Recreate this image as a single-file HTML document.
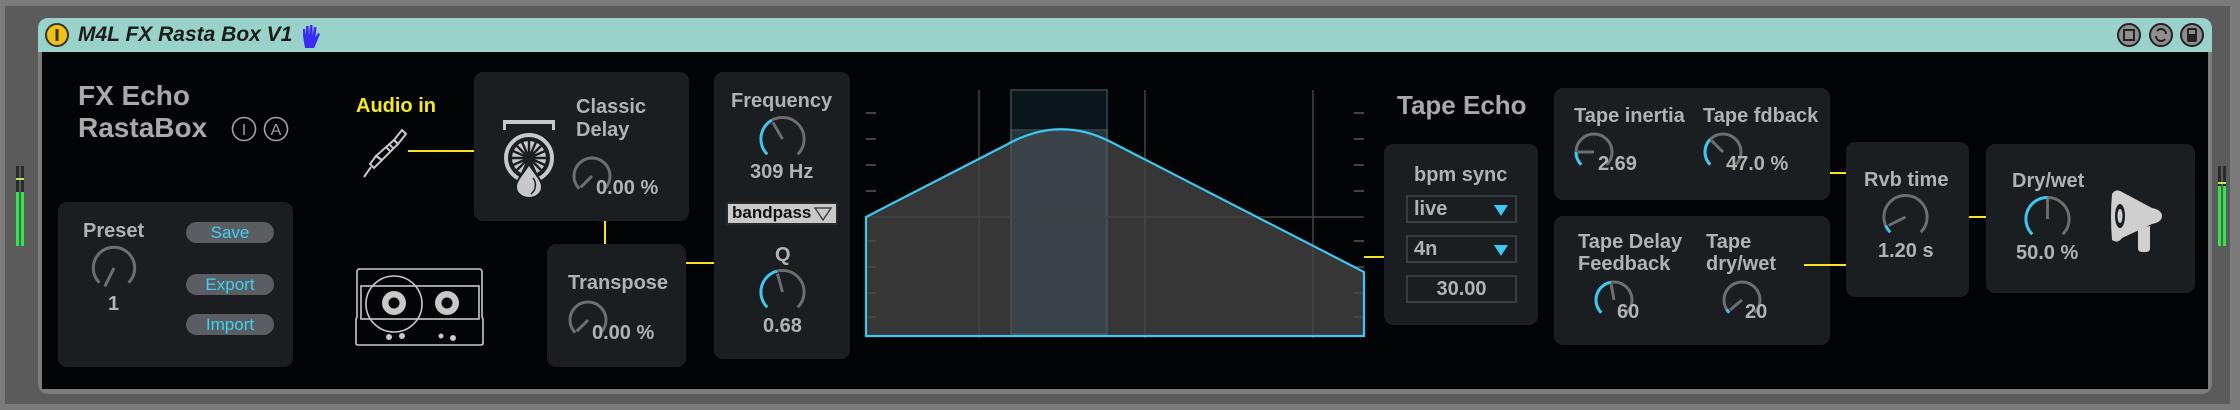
<!DOCTYPE html>
<html><head><meta charset="utf-8"><style>
*{margin:0;padding:0;box-sizing:border-box}
body{width:2240px;height:410px;background:#5b5b5b;position:relative;overflow:hidden;font-family:"Liberation Sans",Arial,sans-serif;font-weight:bold}
.a{position:absolute}
.p{position:absolute;background:#1b1e21;border-radius:9px}
.t{position:absolute;color:#b2b2b2;font-size:20px;white-space:nowrap;line-height:1}
.y{position:absolute;background:#f5e51c}
.btn{position:absolute;background:#5a5e63;border-radius:11px;color:#3fd0f2;font-size:17px;font-weight:normal;text-align:center;line-height:21px;width:88px;height:21px}
.dd{position:absolute;border:2px solid #3a3d40;color:#b2b2b2;font-size:20px;line-height:24px;padding-left:6px;width:111px;height:28px}
svg{position:absolute;overflow:visible}
</style></head><body>
<div class="a" style="left:0;top:0;width:2240px;height:6px;background:#7b7b7b"></div>
<div class="a" style="left:0;top:0;width:5px;height:410px;background:#7b7b7b"></div>
<div class="a" style="left:0;top:404px;width:2240px;height:6px;background:#7b7b7b"></div>
<div class="a" style="left:2230px;top:0;width:10px;height:410px;background:#7b7b7b"></div>
<div class="a" style="left:38px;top:18px;width:2174px;height:376px;background:#7c7c7c;border-radius:10px"></div>
<div class="a" style="left:38px;top:18px;width:2174px;height:34px;background:#98d2c9;border-radius:10px 10px 0 0"></div>
<div class="a" style="left:42px;top:52px;width:2166px;height:337px;background:#030406"></div>
<!-- title -->
<svg style="left:44px;top:22px" width="26" height="26"><circle cx="13" cy="13" r="11" fill="#f2c012" stroke="#333" stroke-width="2"/><rect x="11.5" y="7" width="3" height="12" fill="#333"/></svg>
<div class="a" style="left:78px;top:23px;font-size:21px;font-style:italic;color:#1c1c1c">M4L FX Rasta Box V1</div>
<svg style="left:300px;top:24px" width="22" height="26" viewBox="0 0 22 26"><path d="M5 24 L3 12 L3 5 L5 5 L6 11 L6 2 L8.5 2 L9 11 L10 1 L12.5 1 L12.5 11 L14 3 L16.5 3 L15.5 13 L18 9 L20 10 L15 22 L14 24 Z" fill="#3a2cf5"/></svg>
<svg style="left:2117px;top:22px" width="90" height="27"><g fill="#8e8e8e" stroke="#222" stroke-width="2"><circle cx="12" cy="13" r="11"/><circle cx="44" cy="13" r="11"/><circle cx="75" cy="13" r="11"/></g><rect x="7" y="8" width="10" height="10" fill="none" stroke="#222" stroke-width="2"/><path d="M40 9 A5 5 0 0 1 49 12 M48 17 A5 5 0 0 1 39 14" stroke="#222" stroke-width="2" fill="none"/><rect x="70" y="6" width="10" height="14" rx="2" fill="#222"/><rect x="72" y="8" width="6" height="4" fill="#8e8e8e"/></svg>
<!-- meters -->
<div class="a" style="left:16px;top:166px;width:3px;height:80px;background:#2a2a2a"></div><div class="a" style="left:21px;top:166px;width:3px;height:80px;background:#2a2a2a"></div>
<div class="a" style="left:16px;top:192px;width:3px;height:54px;background:#2ee84a"></div><div class="a" style="left:21px;top:192px;width:3px;height:54px;background:#2ee84a"></div>
<div class="a" style="left:16px;top:178px;width:8px;height:2px;background:#b9e85c"></div>
<div class="a" style="left:2218px;top:166px;width:3px;height:80px;background:#2a2a2a"></div><div class="a" style="left:2223px;top:166px;width:3px;height:80px;background:#2a2a2a"></div>
<div class="a" style="left:2218px;top:186px;width:3px;height:60px;background:#2ee84a"></div><div class="a" style="left:2223px;top:186px;width:3px;height:60px;background:#2ee84a"></div>
<div class="a" style="left:2218px;top:182px;width:8px;height:2px;background:#b9e85c"></div>
<!-- left texts -->
<div class="t" style="left:78px;top:82px;font-size:28px;color:#a9a9a9">FX Echo</div>
<div class="t" style="left:78px;top:114px;font-size:28px;color:#a9a9a9">RastaBox</div>
<svg style="left:232px;top:116px" width="60" height="27"><g fill="none" stroke="#a0a0a0" stroke-width="1.6"><circle cx="12" cy="13" r="11.5"/><circle cx="44" cy="13" r="11.5"/></g><text x="12" y="19" font-size="16" fill="#a0a0a0" text-anchor="middle" font-family="Liberation Sans" font-weight="normal">I</text><text x="44" y="19" font-size="16" fill="#a0a0a0" text-anchor="middle" font-family="Liberation Sans" font-weight="normal">A</text></svg>
<div class="t" style="left:356px;top:96px;color:#f7ea1c;font-size:20px">Audio in</div>
<svg style="left:362px;top:128px" width="46" height="52" viewBox="0 0 46 52"><g fill="none" stroke="#c8c8c8" stroke-width="2"><path d="M40 2 L44 6 L36 16 L32 12 Z"/><path d="M32 12 L36 16 L20 32 L14 28 Z"/><path d="M14 28 L20 32 L12 40 L8 36 Z"/><path d="M9 39 L2 49"/><path d="M24 19 L28 23 M27 16 L31 20"/></g></svg>
<div class="y" style="left:408px;top:150px;width:66px;height:2px"></div>
<!-- classic delay -->
<div class="p" style="left:474px;top:72px;width:215px;height:149px"></div>
<svg style="left:503px;top:120px" width="54" height="78" viewBox="0 0 54 78"><rect x="0" y="0" width="52" height="4" fill="#c8c8c8"/><rect x="0" y="0" width="3" height="10" fill="#c8c8c8"/><rect x="49" y="0" width="3" height="10" fill="#c8c8c8"/><circle cx="26" cy="38" r="23" fill="none" stroke="#c8c8c8" stroke-width="4"/><circle cx="26" cy="38" r="17" fill="#c8c8c8"/><g stroke="#1b1e21" stroke-width="2.4"><path d="M26 21V55M9 38H43M14 26L38 50M38 26L14 50M19 22L33 54M33 22L19 54M10 31L42 45M42 31L10 45"/></g><circle cx="26" cy="38" r="2" fill="#1b1e21"/><path d="M26 44 C20 54 13 60 13 67 A13 11 0 0 0 39 67 C39 60 32 54 26 44Z" fill="#c8c8c8" stroke="#1b1e21" stroke-width="2"/><path d="M30 58 C34 63 33 70 28 74" stroke="#1b1e21" stroke-width="1.5" fill="none"/></svg>
<div class="t" style="left:576px;top:97px">Classic</div>
<div class="t" style="left:576px;top:120px">Delay</div>
<svg style="left:572px;top:156px" width="40" height="40"><path d="M7.27 32.73 A18 18 0 1 1 32.73 32.73" fill="none" stroke="#6e6e6e" stroke-width="3"/><path d="M20 20 L8.69 31.31" stroke="#6e6e6e" stroke-width="3"/></svg>
<div class="t" style="left:596px;top:178px">0.00 %</div>
<div class="y" style="left:604px;top:221px;width:2px;height:23px"></div>
<!-- preset -->
<div class="p" style="left:58px;top:202px;width:235px;height:165px"></div>
<div class="t" style="left:83px;top:221px">Preset</div>
<svg style="left:88px;top:245px" width="52" height="46" viewBox="0 0 40 40"><path d="M7.27 32.73 A18 18 0 1 1 32.73 32.73" fill="none" stroke="#6e6e6e" stroke-width="2.6"/><path d="M20 20 L12 36" stroke="#6e6e6e" stroke-width="2.6"/></svg>
<div class="t" style="left:108px;top:294px">1</div>
<div class="btn" style="left:186px;top:222px">Save</div>
<div class="btn" style="left:186px;top:274px">Export</div>
<div class="btn" style="left:186px;top:314px">Import</div>
<!-- cassette -->
<svg style="left:355px;top:267px" width="130" height="80" viewBox="0 0 130 80"><g fill="none" stroke="#c8c8c8" stroke-width="1.6"><path d="M3 2 H124 Q127 2 127 5 V50 L128 52 V76 Q128 78 126 78 H3 Q1 78 1 76 V52 L2 50 V5 Q2 2 5 2Z"/><rect x="6" y="19" width="118" height="33"/><circle cx="39" cy="37" r="28"/></g><circle cx="39" cy="36" r="12" fill="#c8c8c8"/><circle cx="92" cy="36" r="12" fill="#c8c8c8"/><circle cx="39" cy="36" r="5.5" fill="#030406"/><circle cx="92" cy="36" r="5.5" fill="#030406"/><g fill="#c8c8c8"><circle cx="34" cy="70" r="3"/><circle cx="47" cy="69" r="3"/><circle cx="86" cy="69" r="2.5"/><circle cx="98" cy="71" r="3"/></g></svg>
<!-- transpose -->
<div class="p" style="left:547px;top:244px;width:139px;height:123px"></div>
<div class="t" style="left:568px;top:273px">Transpose</div>
<svg style="left:568px;top:300px" width="40" height="40"><path d="M7.27 32.73 A18 18 0 1 1 32.73 32.73" fill="none" stroke="#6e6e6e" stroke-width="3"/><path d="M20 20 L8.69 31.31" stroke="#6e6e6e" stroke-width="3"/></svg>
<div class="t" style="left:592px;top:323px">0.00 %</div>
<div class="y" style="left:686px;top:262px;width:29px;height:2px"></div>
<!-- frequency -->
<div class="p" style="left:714px;top:72px;width:136px;height:287px"></div>
<div class="t" style="left:731px;top:91px">Frequency</div>
<svg style="left:757px;top:115px" width="51" height="48" viewBox="0 0 40 40"><path d="M7.27 32.73 A18 18 0 1 1 32.73 32.73" fill="none" stroke="#6e6e6e" stroke-width="2.4"/><path d="M7.27 32.73 A18 18 0 0 1 11 4.41" fill="none" stroke="#3cc8f0" stroke-width="2.4"/><path d="M20 20 L12 6.14" stroke="#6e6e6e" stroke-width="2.4"/></svg>
<div class="t" style="left:750px;top:162px">309 Hz</div>
<div class="a" style="left:726px;top:202px;width:112px;height:23px;background:#c9c9c9;border:2px solid #2a2a2a"></div>
<div class="t" style="left:732px;top:204px;color:#111;font-size:17px">bandpass</div>
<svg style="left:814px;top:207px" width="18" height="14"><path d="M1 1 H17 L9 13Z" fill="none" stroke="#444" stroke-width="1.5"/></svg>
<div class="t" style="left:775px;top:245px">Q</div>
<svg style="left:757px;top:268px" width="51" height="48" viewBox="0 0 40 40"><path d="M7.27 32.73 A18 18 0 1 1 32.73 32.73" fill="none" stroke="#6e6e6e" stroke-width="2.4"/><path d="M7.27 32.73 A18 18 0 0 1 15.28 2.63" fill="none" stroke="#3cc8f0" stroke-width="2.4"/><path d="M20 20 L15.8 4.56" stroke="#6e6e6e" stroke-width="2.4"/></svg>
<div class="t" style="left:763px;top:316px">0.68</div>
<div class="y" style="left:700px;top:262px;width:14px;height:2px"></div>
<!-- graph -->
<svg style="left:866px;top:90px" width="498" height="248" viewBox="0 0 498 248">
<rect x="145" y="0" width="96" height="244" fill="#0b161b" stroke="#3a4a52" stroke-width="1.5"/>
<path d="M0 127 L140 55 Q193 25 245 52 L498 182 L498 246 L0 246 Z" fill="#363636"/>
<rect x="145" y="40" width="96" height="204" fill="#3c4f58" opacity="0.55" stroke="#5a7078" stroke-width="1.5"/>
<g stroke="#444" stroke-width="1.5"><path d="M113 0V248M279 0V248M447 0V248M0 127H498"/></g>
<g stroke="#444" stroke-width="2"><path d="M0 23H10M0 49H10M0 75H10M0 101H10M0 151H10M0 177H10M0 203H10M0 227H10M488 23H498M488 49H498M488 75H498M488 101H498M488 151H498M488 177H498M488 203H498M488 227H498"/></g>
<path d="M0 246 V127 L140 55 Q193 25 245 52 L498 182 V246 Z" fill="none" stroke="#3cc8f0" stroke-width="2.2"/>
</svg>
<div class="y" style="left:1364px;top:256px;width:20px;height:2px"></div>
<!-- tape echo -->
<div class="t" style="left:1397px;top:92px;font-size:26px;color:#a9a9a9">Tape Echo</div>
<div class="p" style="left:1384px;top:144px;width:154px;height:181px"></div>
<div class="t" style="left:1414px;top:165px">bpm sync</div>
<div class="dd" style="left:1406px;top:195px">live</div>
<div class="dd" style="left:1406px;top:235px">4n</div>
<div class="dd" style="left:1406px;top:275px;text-align:center;padding:0">30.00</div>
<svg style="left:1494px;top:205px" width="14" height="54"><path d="M0 0H14L7 11Z M0 40H14L7 51Z" fill="#3cc8f0"/></svg>
<div class="p" style="left:1554px;top:88px;width:276px;height:112px"></div>
<div class="t" style="left:1574px;top:106px">Tape inertia</div>
<div class="t" style="left:1703px;top:106px">Tape fdback</div>
<svg style="left:1574px;top:132px" width="40" height="40"><path d="M7.27 32.73 A18 18 0 1 1 32.73 32.73" fill="none" stroke="#6e6e6e" stroke-width="3"/><path d="M7.27 32.73 A18 18 0 0 1 2 20" fill="none" stroke="#3cc8f0" stroke-width="3"/><path d="M20 20 L4 20" stroke="#6e6e6e" stroke-width="3"/></svg>
<div class="t" style="left:1598px;top:154px">2.69</div>
<svg style="left:1703px;top:132px" width="40" height="40"><path d="M7.27 32.73 A18 18 0 1 1 32.73 32.73" fill="none" stroke="#6e6e6e" stroke-width="3"/><path d="M7.27 32.73 A18 18 0 0 1 7.27 7.27" fill="none" stroke="#3cc8f0" stroke-width="3"/><path d="M20 20 L8.69 8.69" stroke="#6e6e6e" stroke-width="3"/></svg>
<div class="t" style="left:1726px;top:154px">47.0 %</div>
<div class="p" style="left:1554px;top:216px;width:276px;height:129px"></div>
<div class="t" style="left:1578px;top:232px">Tape Delay</div>
<div class="t" style="left:1578px;top:254px">Feedback</div>
<div class="t" style="left:1706px;top:232px">Tape</div>
<div class="t" style="left:1706px;top:254px">dry/wet</div>
<svg style="left:1594px;top:280px" width="40" height="40"><path d="M7.27 32.73 A18 18 0 1 1 32.73 32.73" fill="none" stroke="#6e6e6e" stroke-width="3"/><path d="M7.27 32.73 A18 18 0 0 1 16.87 2.27" fill="none" stroke="#3cc8f0" stroke-width="3"/><path d="M20 20 L17.2 4.24" stroke="#6e6e6e" stroke-width="3"/></svg>
<div class="t" style="left:1617px;top:302px">60</div>
<svg style="left:1722px;top:280px" width="40" height="40"><path d="M7.27 32.73 A18 18 0 1 1 32.73 32.73" fill="none" stroke="#6e6e6e" stroke-width="3"/><path d="M7.27 32.73 A18 18 0 0 1 4.65 29.4" fill="none" stroke="#3cc8f0" stroke-width="3"/><path d="M20 20 L8 30" stroke="#6e6e6e" stroke-width="3"/></svg>
<div class="t" style="left:1745px;top:302px">20</div>
<div class="y" style="left:1830px;top:172px;width:16px;height:2px"></div>
<div class="y" style="left:1804px;top:264px;width:42px;height:2px"></div>
<!-- rvb -->
<div class="p" style="left:1846px;top:142px;width:123px;height:155px"></div>
<div class="t" style="left:1864px;top:170px">Rvb time</div>
<svg style="left:1880px;top:193px" width="51" height="48" viewBox="0 0 40 40"><path d="M7.27 32.73 A18 18 0 1 1 32.73 32.73" fill="none" stroke="#6e6e6e" stroke-width="2.4"/><path d="M7.27 32.73 A18 18 0 0 1 3.48 27.15" fill="none" stroke="#3cc8f0" stroke-width="2.4"/><path d="M20 20 L6 27" stroke="#6e6e6e" stroke-width="2.4"/></svg>
<div class="t" style="left:1878px;top:241px">1.20 s</div>
<div class="y" style="left:1969px;top:216px;width:17px;height:2px"></div>
<!-- dry wet -->
<div class="p" style="left:1986px;top:144px;width:209px;height:149px"></div>
<div class="t" style="left:2012px;top:171px">Dry/wet</div>
<svg style="left:2022px;top:195px" width="51" height="48" viewBox="0 0 40 40"><path d="M7.27 32.73 A18 18 0 1 1 32.73 32.73" fill="none" stroke="#6e6e6e" stroke-width="2.4"/><path d="M7.27 32.73 A18 18 0 0 1 20 2" fill="none" stroke="#3cc8f0" stroke-width="2.4"/><path d="M20 20 L20 3" stroke="#6e6e6e" stroke-width="2.4"/></svg>
<div class="t" style="left:2016px;top:243px">50.0 %</div>
<svg style="left:2108px;top:186px" width="58" height="66" viewBox="0 0 58 66"><path d="M4 8 Q2 30 4 54 Q10 58 14 52 L44 38 Q54 36 54 30 Q54 24 44 22 L14 6 Q8 2 4 8Z" fill="#cfcfcf"/><ellipse cx="12" cy="30" rx="5" ry="12" fill="#1b1e21"/><ellipse cx="12" cy="30" rx="2.5" ry="7" fill="#cfcfcf"/><path d="M30 42 L42 40 L42 62 Q42 66 38 66 L34 66 Q30 66 30 62Z" fill="#cfcfcf"/></svg>
</body></html>
